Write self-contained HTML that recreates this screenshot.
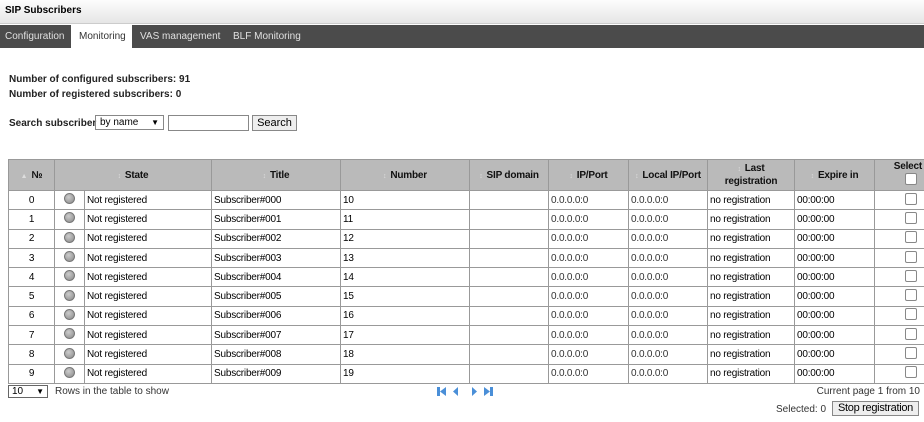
<!DOCTYPE html>
<html><head><style>
body{margin:0;width:924px;height:422px;background:#fff;font-family:"Liberation Sans",Arial,sans-serif;font-size:10px;color:#000;position:relative;overflow:hidden}
.title{position:absolute;left:0;top:0;width:924px;height:24px;background:linear-gradient(#fdfdfd,#e6e6e6);border-bottom:1px solid #ccc;font-weight:bold;font-size:10px;line-height:22px;padding-left:5px;box-sizing:border-box}
.tabs{position:absolute;left:0;top:25px;width:924px;height:23px;background:#4b4b4b}
.tab{position:absolute;top:0;height:23px;line-height:23px;color:#e0e0e0;font-size:10px;white-space:nowrap}
.tab.act{background:#fff;color:#333}
.t{position:absolute;font-size:10px;white-space:nowrap}
table{position:absolute;left:8px;top:159px;border-collapse:collapse;table-layout:fixed;width:916px}
td,th{border:1px solid #999;padding:0 2px;height:18.3px;font-size:10px;white-space:nowrap;overflow:hidden;letter-spacing:-0.2px}
th{background:#bababa;font-weight:bold;height:29px;color:#111}
th .a{color:#ddd;font-size:7px;margin-right:4px}
td.c{text-align:center}
.dot{display:inline-block;width:9px;height:9px;border-radius:50%;background:radial-gradient(circle at 40% 35%,#ccc,#888);border:1px solid #777}
.cb{display:inline-block;width:10px;height:10px;border:1px solid #888;border-radius:2px;background:#fff}
td.ip{color:#333}
</style></head><body>
<div class="title">SIP Subscribers</div>
<div class="tabs">
<div class="tab" style="left:5px">Configuration</div>
<div class="tab act" style="left:71px;width:61px;padding-left:8px;box-sizing:border-box">Monitoring</div>
<div class="tab" style="left:140px">VAS management</div>
<div class="tab" style="left:233px">BLF Monitoring</div>
</div>
<div class="t" style="left:9px;top:74px;font-weight:bold;color:#222">Number of configured subscribers: 91</div>
<div class="t" style="left:9px;top:89px;font-weight:bold;color:#222">Number of registered subscribers: 0</div>
<div class="t" style="left:9px;top:118px;font-weight:bold;color:#222">Search subscriber</div>
<div style="position:absolute;left:95px;top:115px;width:69px;height:15px;border:1px solid #888;box-sizing:border-box;font-size:10px;line-height:13px;padding-left:4px;white-space:nowrap">by name<span style="position:absolute;right:4px;top:0;font-size:8px">&#9660;</span></div>
<div style="position:absolute;left:168px;top:115px;width:81px;height:16px;border:1px solid #888;box-sizing:border-box"></div>
<div style="position:absolute;left:252px;top:115px;width:45px;height:16px;border:1px solid #888;background:#eee;box-sizing:border-box;font-size:11px;text-align:center;line-height:14px">Search</div>
<table>
<colgroup><col style="width:46px"><col style="width:30px"><col style="width:127px"><col style="width:129px"><col style="width:129px"><col style="width:79px"><col style="width:80px"><col style="width:79px"><col style="width:87px"><col style="width:80px"><col style="width:50px"></colgroup>
<tr><th><span class="a">&#9650;</span>№</th><th colspan="2"><span class="a">&#8597;</span>State</th><th><span class="a">&#8597;</span>Title</th><th><span class="a">&#8597;</span>Number</th><th><span class="a">&#8597;</span>SIP domain</th><th><span class="a">&#8597;</span>IP/Port</th><th><span class="a">&#8597;</span>Local IP/Port</th><th style="line-height:12px"><span class="a">&#8597;</span>Last<br>registration</th><th><span class="a">&#8597;</span>Expire in</th><th style="text-align:right;vertical-align:top;line-height:12px;padding-top:1px">Select<br><span class="cb" style="margin-right:5px"></span></th></tr>
<tr><td class="c">0</td><td class="c"><span class="dot"></span></td><td>Not registered</td><td>Subscriber#000</td><td>10</td><td></td><td class="ip">0.0.0.0:0</td><td class="ip">0.0.0.0:0</td><td>no registration</td><td>00:00:00</td><td style="text-align:right"><span class="cb" style="margin-right:5px"></span></td></tr>
<tr><td class="c">1</td><td class="c"><span class="dot"></span></td><td>Not registered</td><td>Subscriber#001</td><td>11</td><td></td><td class="ip">0.0.0.0:0</td><td class="ip">0.0.0.0:0</td><td>no registration</td><td>00:00:00</td><td style="text-align:right"><span class="cb" style="margin-right:5px"></span></td></tr>
<tr><td class="c">2</td><td class="c"><span class="dot"></span></td><td>Not registered</td><td>Subscriber#002</td><td>12</td><td></td><td class="ip">0.0.0.0:0</td><td class="ip">0.0.0.0:0</td><td>no registration</td><td>00:00:00</td><td style="text-align:right"><span class="cb" style="margin-right:5px"></span></td></tr>
<tr><td class="c">3</td><td class="c"><span class="dot"></span></td><td>Not registered</td><td>Subscriber#003</td><td>13</td><td></td><td class="ip">0.0.0.0:0</td><td class="ip">0.0.0.0:0</td><td>no registration</td><td>00:00:00</td><td style="text-align:right"><span class="cb" style="margin-right:5px"></span></td></tr>
<tr><td class="c">4</td><td class="c"><span class="dot"></span></td><td>Not registered</td><td>Subscriber#004</td><td>14</td><td></td><td class="ip">0.0.0.0:0</td><td class="ip">0.0.0.0:0</td><td>no registration</td><td>00:00:00</td><td style="text-align:right"><span class="cb" style="margin-right:5px"></span></td></tr>
<tr><td class="c">5</td><td class="c"><span class="dot"></span></td><td>Not registered</td><td>Subscriber#005</td><td>15</td><td></td><td class="ip">0.0.0.0:0</td><td class="ip">0.0.0.0:0</td><td>no registration</td><td>00:00:00</td><td style="text-align:right"><span class="cb" style="margin-right:5px"></span></td></tr>
<tr><td class="c">6</td><td class="c"><span class="dot"></span></td><td>Not registered</td><td>Subscriber#006</td><td>16</td><td></td><td class="ip">0.0.0.0:0</td><td class="ip">0.0.0.0:0</td><td>no registration</td><td>00:00:00</td><td style="text-align:right"><span class="cb" style="margin-right:5px"></span></td></tr>
<tr><td class="c">7</td><td class="c"><span class="dot"></span></td><td>Not registered</td><td>Subscriber#007</td><td>17</td><td></td><td class="ip">0.0.0.0:0</td><td class="ip">0.0.0.0:0</td><td>no registration</td><td>00:00:00</td><td style="text-align:right"><span class="cb" style="margin-right:5px"></span></td></tr>
<tr><td class="c">8</td><td class="c"><span class="dot"></span></td><td>Not registered</td><td>Subscriber#008</td><td>18</td><td></td><td class="ip">0.0.0.0:0</td><td class="ip">0.0.0.0:0</td><td>no registration</td><td>00:00:00</td><td style="text-align:right"><span class="cb" style="margin-right:5px"></span></td></tr>
<tr><td class="c">9</td><td class="c"><span class="dot"></span></td><td>Not registered</td><td>Subscriber#009</td><td>19</td><td></td><td class="ip">0.0.0.0:0</td><td class="ip">0.0.0.0:0</td><td>no registration</td><td>00:00:00</td><td style="text-align:right"><span class="cb" style="margin-right:5px"></span></td></tr>
</table>
<div style="position:absolute;left:8px;top:385px;width:40px;height:13px;border:1px solid #666;box-sizing:border-box;font-size:10px;line-height:11px;padding-left:3px">10<span style="position:absolute;right:3px;top:0;font-size:8px">&#9660;</span></div>
<div class="t" style="left:55px;top:386px;color:#333;font-size:10px">Rows in the table to show</div>
<svg style="position:absolute;left:436px;top:385px" width="58" height="13" viewBox="0 0 58 13">
<g fill="#4a8fd8"><rect x="1" y="2" width="3" height="9"/><path d="M4 6.5 L10 2 V11 Z"/><path d="M17 6.5 L22 2 V11 Z"/><path d="M36 2 L41 6.5 L36 11 Z"/><path d="M48 2 L54 6.5 L48 11 Z"/><rect x="54" y="2" width="3" height="9"/></g></svg>
<div class="t" style="right:4px;top:386px;color:#333;font-size:10px">Current page 1 from 10</div>
<div class="t" style="left:776px;top:404px;color:#333;font-size:10px">Selected: 0</div>
<div style="position:absolute;left:832px;top:401px;width:87px;height:15px;border:1px solid #888;background:#eee;box-sizing:border-box;font-size:11px;text-align:center;line-height:13px;white-space:nowrap;letter-spacing:-0.3px">Stop registration</div>
</body></html>
